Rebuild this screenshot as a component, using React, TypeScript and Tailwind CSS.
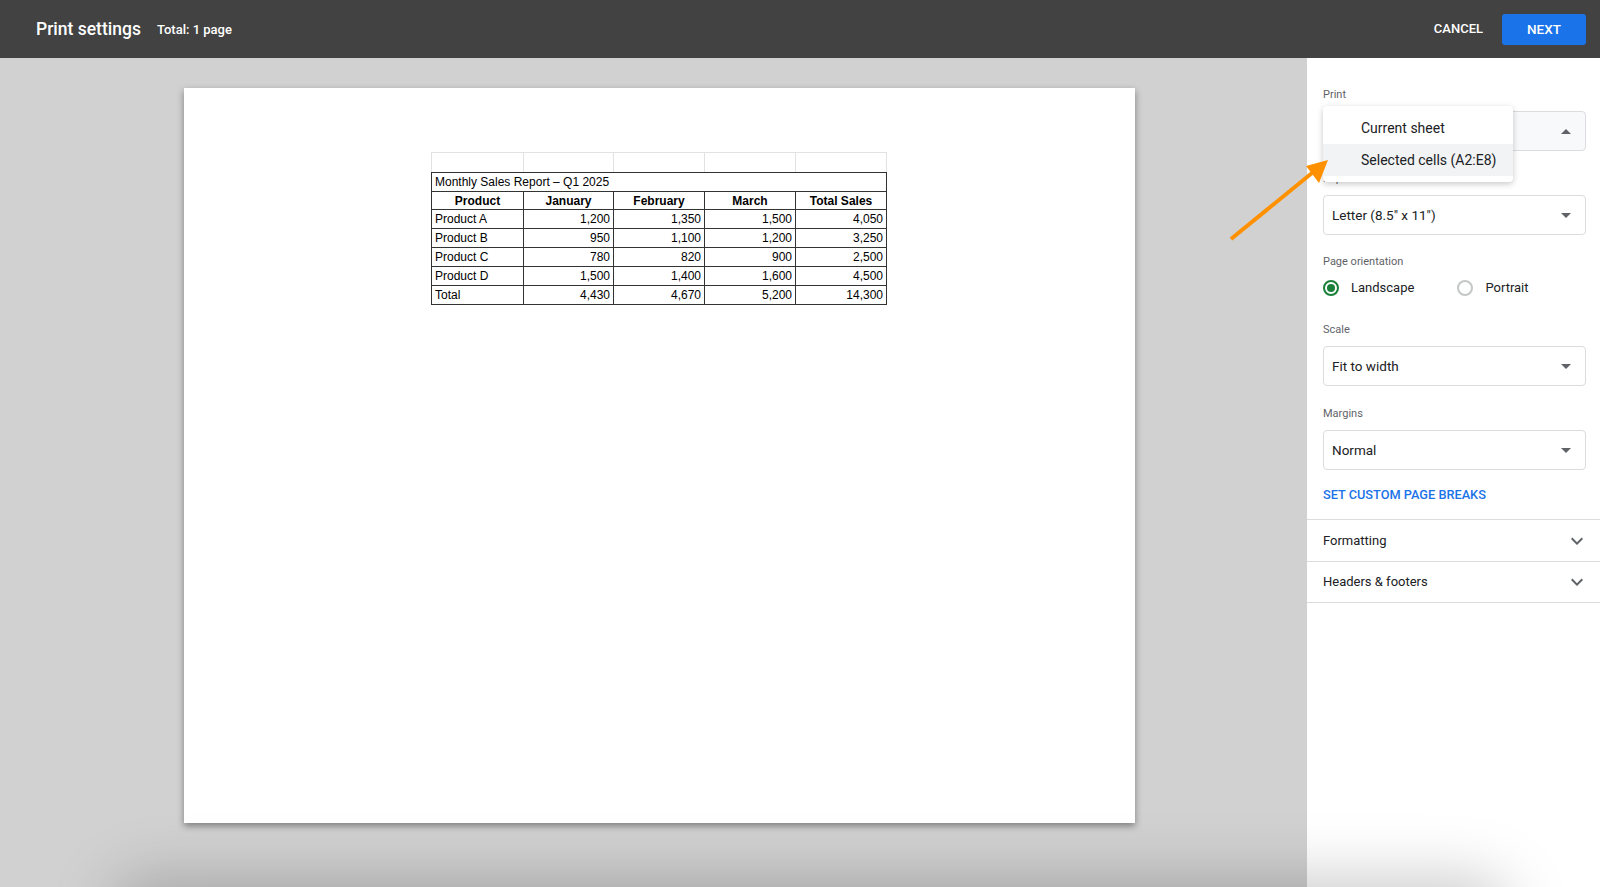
import React from 'react';

const rows = [
  ['Product A', '1,200', '1,350', '1,500', '4,050'],
  ['Product B', '950', '1,100', '1,200', '3,250'],
  ['Product C', '780', '820', '900', '2,500'],
  ['Product D', '1,500', '1,400', '1,600', '4,500'],
  ['Total', '4,430', '4,670', '5,200', '14,300'],
];

const headers = ['Product', 'January', 'February', 'March', 'Total Sales'];
const colWidths = ['w-[92px]', 'w-[90px]', 'w-[91px]', 'w-[91px]', 'w-[91px]'];

const Caret: React.FC<{ up?: boolean }> = ({ up }) => (
  <svg width="10" height="5" viewBox="0 0 10 5" className="text-[#5f6368]">
    {up ? <path d="M0 5 L5 0 L10 5 Z" fill="currentColor" /> : <path d="M0 0 L5 5 L10 0 Z" fill="currentColor" />}
  </svg>
);

const Chevron: React.FC = () => (
  <svg width="24" height="24" viewBox="0 0 24 24" className="text-[#5f6368]">
    <path d="M7.41 8.59 12 13.17l4.59-4.58L18 10l-6 6-6-6z" fill="currentColor" />
  </svg>
);

const Select: React.FC<{ value: string; open?: boolean }> = ({ value, open }) => (
  <div
    className={`h-[40px] mr-[14px] rounded-[4px] border border-[#dadce0] flex items-center justify-between pl-[8px] pr-[14px] text-[13.5px] text-[#202124] ${
      open ? 'bg-[#f8f9fa]' : 'bg-white'
    }`}
  >
    <span>{value}</span>
    <Caret up={open} />
  </div>
);

const Label: React.FC<{ children: React.ReactNode }> = ({ children }) => (
  <div className="h-[14px] leading-[14px] text-[11px] text-[#5f6368]">{children}</div>
);

const App: React.FC = () => {
  return (
    <div
      className="relative h-[887px] w-[1600px] overflow-hidden flex flex-col"
      style={{ fontFamily: 'Roboto, "Liberation Sans", sans-serif' }}
    >
      <header className="h-[58px] bg-[#424242] flex items-center pl-[36px] pr-[14px] text-white">
        <h1 className="text-[17.5px] font-medium">Print settings</h1>
        <span className="ml-[16px] text-[13px] font-medium pt-[2px]">Total: 1 page</span>
        <div className="ml-auto flex items-center">
          <button className="text-[13px] font-medium mr-[19px]">CANCEL</button>
          <button className="w-[84px] h-[31px] bg-[#1a73e8] rounded-[3px] text-[13.5px] font-medium">NEXT</button>
        </div>
      </header>

      <div className="flex flex-1 min-h-0">
        <main className="relative flex-1 bg-[#d1d1d1] pt-[30px] pl-[184px]">
          <div className="w-[951px] h-[735px] bg-white shadow-[0_3px_7px_rgba(0,0,0,0.4)] pt-[64px] pl-[247px]">
            <table
              className="table-fixed border-collapse text-[12px] text-black"
              style={{ fontFamily: '"Liberation Sans", Arial, sans-serif' }}
            >
              <colgroup>
                {colWidths.map((w, i) => (
                  <col key={i} className={w} />
                ))}
              </colgroup>
              <tbody>
                <tr className="h-[20px]">
                  {headers.map((_, i) => (
                    <td key={i} className="border border-[#e2e2e2] border-b-[#333]" />
                  ))}
                </tr>
                <tr className="h-[19px]">
                  <td colSpan={5} className="border border-[#333] px-[3px] leading-none">
                    Monthly Sales Report – Q1 2025
                  </td>
                </tr>
                <tr className="h-[18px]">
                  {headers.map((h) => (
                    <td key={h} className="border border-[#333] text-center font-bold leading-none">
                      {h}
                    </td>
                  ))}
                </tr>
                {rows.map((r) => (
                  <tr key={r[0]} className="h-[19px]">
                    {r.map((c, i) => (
                      <td
                        key={i}
                        className={`border border-[#333] px-[3px] leading-none ${i === 0 ? 'text-left' : 'text-right'}`}
                      >
                        {c}
                      </td>
                    ))}
                  </tr>
                ))}
              </tbody>
            </table>
          </div>
        </main>

        <aside className="relative w-[293px] bg-white pt-[30px]">
          <div className="pl-[16px]">
            <Label>Print</Label>
            <div className="mt-[9px]">
              <Select value="" open />
            </div>

            <div className="mt-[21px]">
              <Label>Paper size</Label>
            </div>
            <div className="mt-[9px]">
              <Select value={'Letter (8.5" x 11")'} />
            </div>

            <div className="mt-[20px]">
              <Label>Page orientation</Label>
            </div>
            <div className="mt-[9px] h-[20px] flex items-center text-[13px] text-[#202124]">
              <span className="w-[16px] h-[16px] rounded-full border-2 border-[#188038] flex items-center justify-center">
                <span className="w-[8px] h-[8px] rounded-full bg-[#188038]" />
              </span>
              <span className="ml-[12px]">Landscape</span>
              <span className="ml-[43px] w-[16px] h-[16px] rounded-full border-2 border-[#c4c7c5]" />
              <span className="ml-[12px]">Portrait</span>
            </div>

            <div className="mt-[25px]">
              <Label>Scale</Label>
            </div>
            <div className="mt-[9px]">
              <Select value="Fit to width" />
            </div>

            <div className="mt-[21px]">
              <Label>Margins</Label>
            </div>
            <div className="mt-[9px]">
              <Select value="Normal" />
            </div>

            <div className="mt-[17px] h-[16px] leading-[16px] text-[12.75px] font-medium text-[#1a73e8]">
              SET CUSTOM PAGE BREAKS
            </div>
          </div>

          <div className="mt-[16px] border-t border-[#dadce0]">
            <div className="h-[42px] flex items-center justify-between pl-[16px] pr-[11px] text-[13px] text-[#202124] border-b border-[#dadce0]">
              <span>Formatting</span>
              <Chevron />
            </div>
            <div className="h-[41px] flex items-center justify-between pl-[16px] pr-[11px] text-[13px] text-[#202124] border-b border-[#dadce0]">
              <span>Headers &amp; footers</span>
              <Chevron />
            </div>
          </div>

          <div className="absolute left-[16px] top-[48px] w-[190px] bg-white rounded-[4px] shadow-[0_2px_6px_rgba(0,0,0,0.22)] py-[6px] text-[14px] text-[#202124]">
            <div className="h-[32px] flex items-center pl-[38px]">Current sheet</div>
            <div className="h-[32px] flex items-center pl-[38px] bg-[#f1f3f4]">Selected cells (A2:E8)</div>
          </div>
        </aside>
      </div>

      <div className="pointer-events-none absolute left-[110px] right-[90px] bottom-[-70px] h-[80px] rounded-full bg-black/20 blur-[30px]" />

      <svg className="pointer-events-none absolute left-0 top-0" width="1600" height="887">
        <line x1="1231" y1="239" x2="1312" y2="173" stroke="#ff9100" strokeWidth="4" />
        <polygon points="1328,160 1306,166 1319,183" fill="#ff9100" />
      </svg>
    </div>
  );
};

export default App;
